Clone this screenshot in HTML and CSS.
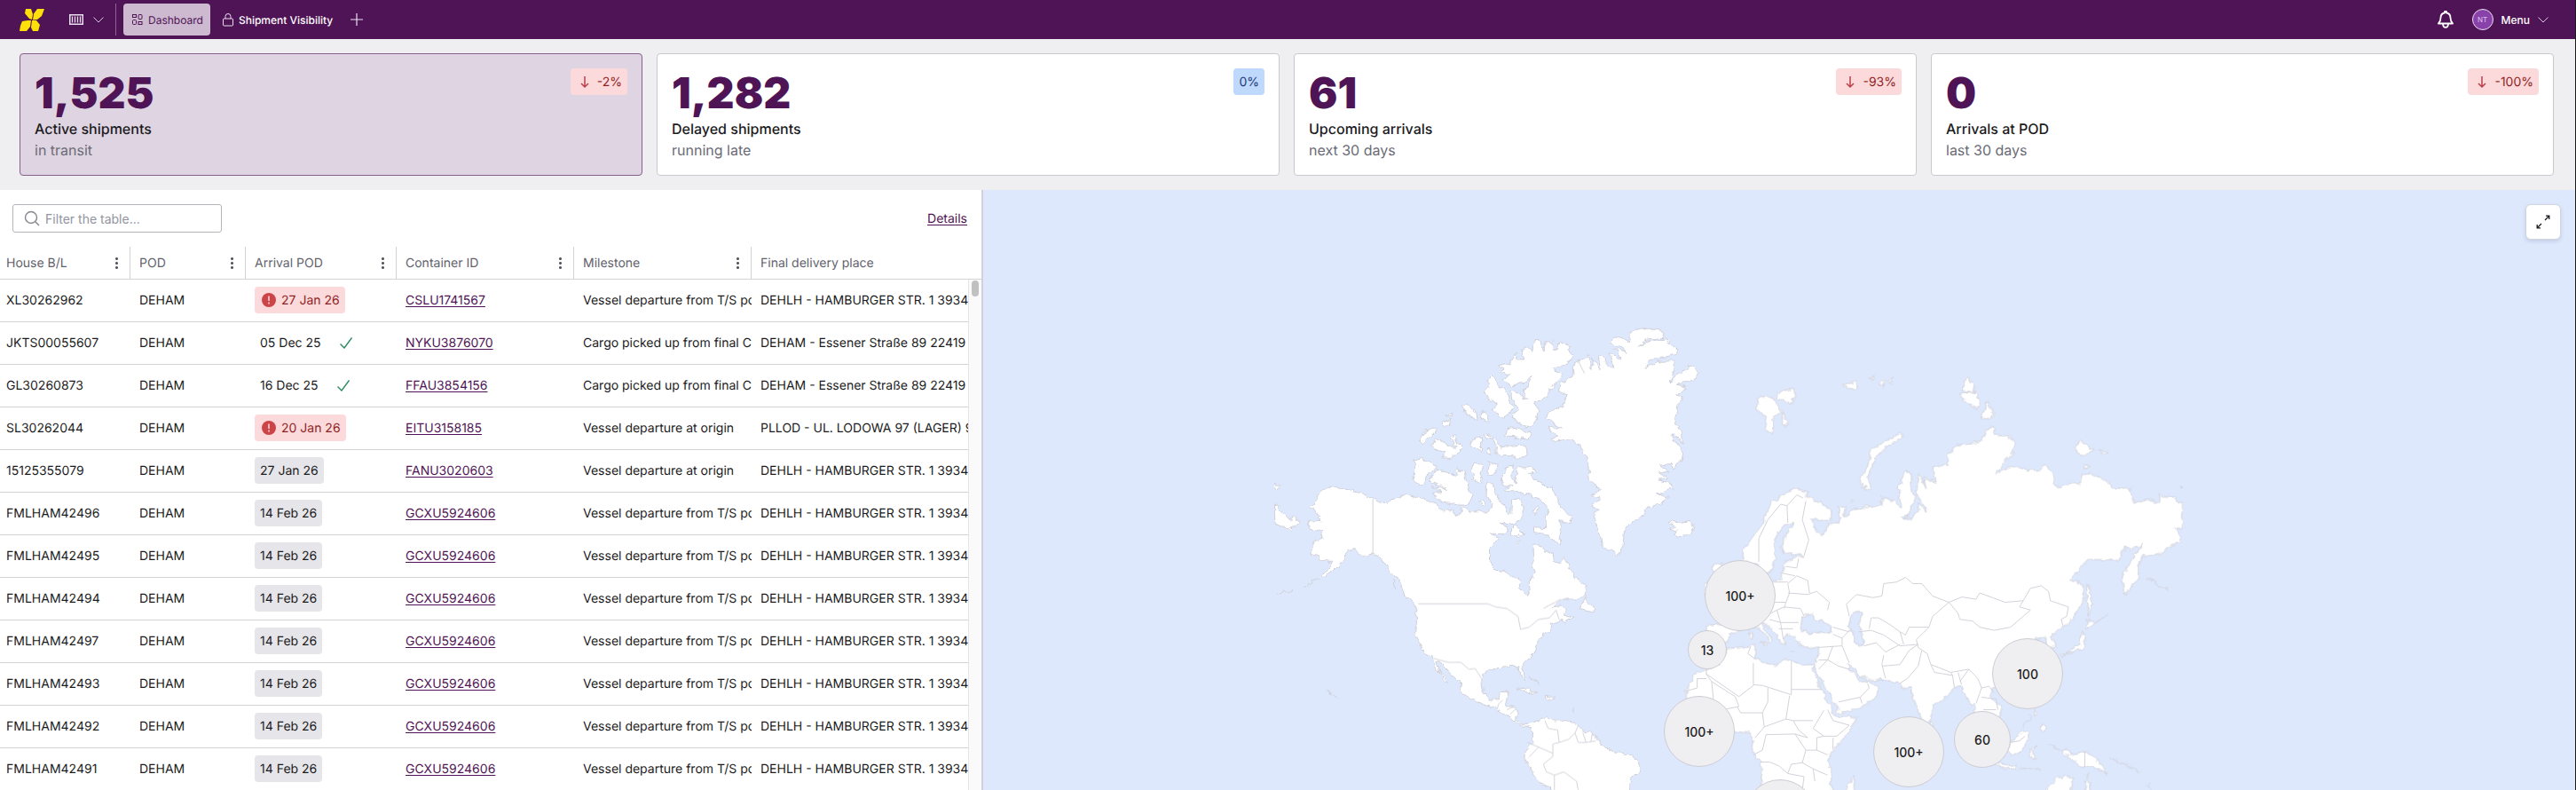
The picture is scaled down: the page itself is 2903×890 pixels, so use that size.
FILE: index.html
```html
<!DOCTYPE html>
<html lang="en">
<head>
<meta charset="utf-8">
<title>Dashboard</title>
<link rel="stylesheet" href="styles.css">
</head>
<body>
<div class="app">
<header class="topbar">
  <svg class="logo" viewBox="0 0 28 25" fill="#ffdf0a"><path d="M7 0h6l2 6-1 6-3-1-5-6zM20 0h8l-3 8-5 4-5 .5 1-7zM3 14l6-1 4 0-1 7-4 5H0l1-6zM14 13l5 0 4 5-2 7h-6l-2-4z"/></svg>
  <button class="switcher" aria-label="Switch module">
    <svg class="box-icon" viewBox="0 0 16 12" fill="none" stroke="#eadff0"><path d="M.75.75h14.5v10.5H.75z" stroke-width="1.5"/><path d="M3.5 2.5v7M6.5 2.5v7M9.500 2.500v7M12.500 2.500v7" stroke-width="1.300"/></svg>
    <svg class="chevron" viewBox="0 0 12 7" fill="none" stroke="#d9c6df"><path d="M.5.5 6 6 11.500.5"/></svg>
  </button>
  <nav class="tabs">
    <a class="tab tab-active" href="#dashboard"><svg class="tab-icon" viewBox="0 0 12 12" fill="none" stroke="currentColor"><rect x=".5" y=".5" width="4" height="3"/><rect x="7" y=".5" width="4" height="5" rx="1"/><rect x=".5" y="6.500" width="4" height="5" rx="1"/><rect x="7" y="8.500" width="4" height="3"/></svg>Dashboard</a>
    <a class="tab" href="#visibility"><svg class="lock-icon" viewBox="0 0 12 15" fill="none" stroke="#eadff0"><rect x=".5" y="6" width="11" height="8" rx="1"/><path d="M3 6V3.500a3 3 0 0 1 6 0V6"/></svg>Shipment Visibility</a>
  </nav>
  <button class="add" aria-label="Add tab"><svg class="plus" viewBox="0 0 14 14" stroke="#eadff0" stroke-width="1.200"><path d="M7 0v14M0 7h14"/></svg></button>
  <div class="account">
    <button class="bell" aria-label="Notifications"><svg class="bell-icon" viewBox="0 0 18 20" fill="none" stroke="#fff" stroke-width="1.800" stroke-linejoin="round"><path d="M1 14.500h16c-2-2-2.500-3-2.500-6.500 0-3-2-5-4.500-5.500V1H8v1.500C5.500 3 3.500 5 3.500 8c0 3.500-.5 4.500-2.500 6.500zM6 15.500c.5 4.500 5.500 4.500 6 0"/></svg></button>
    <button class="menu"><span class="avatar">NT</span>Menu<svg class="chevron" viewBox="0 0 12 7" fill="none" stroke="#d9c6df"><path d="M.5.5 6 6 11.500.5"/></svg></button>
  </div>
</header>

<section class="cards">
  <article class="card card-active"><div><p class="figure">1,525</p><h2 class="label">Active shipments</h2><p class="note">in transit</p></div><span class="badge badge-down"><svg class="arrow" viewBox="0 0 20 20"><path d="M10 4v12M6 12l4 4 4-4"/></svg>-2%</span></article>
  <article class="card"><div><p class="figure">1,282</p><h2 class="label">Delayed shipments</h2><p class="note">running late</p></div><span class="badge badge-flat">0%</span></article>
  <article class="card"><div><p class="figure">61</p><h2 class="label">Upcoming arrivals</h2><p class="note">next 30 days</p></div><span class="badge badge-down"><svg class="arrow" viewBox="0 0 20 20"><path d="M10 4v12M6 12l4 4 4-4"/></svg>-93%</span></article>
  <article class="card"><div><p class="figure">0</p><h2 class="label">Arrivals at POD</h2><p class="note">last 30 days</p></div><span class="badge badge-down"><svg class="arrow" viewBox="0 0 20 20"><path d="M10 4v12M6 12l4 4 4-4"/></svg>-100%</span></article>
</section>

<main class="main">
<section class="list">
  <div class="tools">
    <label class="search"><svg class="lens" viewBox="0 0 18 18" fill="none" stroke="#85868e" stroke-width="1.400"><circle cx="8" cy="8" r="6.500"/><path d="m13 13 4 4"/></svg><input type="text" placeholder="Filter the table..." aria-label="Filter the table"></label>
    <a class="link" href="#details">Details</a>
  </div>
  <div class="grid">
    <table class="table">
      <colgroup><col class="c-house"><col class="c-pod"><col class="c-arrival"><col class="c-wide"><col class="c-wide"><col></colgroup>
      <thead><tr>
        <th><div class="head">House B/L<button class="dots" aria-label="Column menu"></button></div></th>
        <th><div class="head">POD<button class="dots" aria-label="Column menu"></button></div></th>
        <th><div class="head">Arrival POD<button class="dots" aria-label="Column menu"></button></div></th>
        <th><div class="head">Container ID<button class="dots" aria-label="Column menu"></button></div></th>
        <th><div class="head">Milestone<button class="dots" aria-label="Column menu"></button></div></th>
        <th><div class="head">Final delivery place</div></th>
      </tr></thead>
      <tbody>
        <tr><td>XL30262962</td><td>DEHAM</td><td><span class="badge badge-late"><svg class="alert" viewBox="0 0 16 16"><circle cx="8" cy="8" r="8"/><path d="M8 3.500v5.500M8 10.500v2"/></svg>27 Jan 26</span></td><td><a class="link" href="#c1">CSLU1741567</a></td><td>Vessel departure from T/S port</td><td>DEHLH - HAMBURGER STR. 1 39340 HALDENSLEBEN</td></tr>
        <tr><td>JKTS00055607</td><td>DEHAM</td><td><span class="badge badge-done">05 Dec 25<svg class="check" viewBox="0 0 14 13"><path d="m.5 7.500 4.500 4.500L13.500.5"/></svg></span></td><td><a class="link" href="#c2">NYKU3876070</a></td><td>Cargo picked up from final CY</td><td>DEHAM - Essener Straße 89 22419</td></tr>
        <tr><td>GL30260873</td><td>DEHAM</td><td><span class="badge badge-done">16 Dec 25<svg class="check" viewBox="0 0 14 13"><path d="m.5 7.500 4.500 4.500L13.500.5"/></svg></span></td><td><a class="link" href="#c3">FFAU3854156</a></td><td>Cargo picked up from final CY</td><td>DEHAM - Essener Straße 89 22419</td></tr>
        <tr><td>SL30262044</td><td>DEHAM</td><td><span class="badge badge-late"><svg class="alert" viewBox="0 0 16 16"><circle cx="8" cy="8" r="8"/><path d="M8 3.500v5.500M8 10.500v2"/></svg>20 Jan 26</span></td><td><a class="link" href="#c4">EITU3158185</a></td><td>Vessel departure at origin</td><td>PLLOD - UL. LODOWA 97 (LAGER) 93-232</td></tr>
        <tr><td>15125355079</td><td>DEHAM</td><td><span class="badge badge-plan">27 Jan 26</span></td><td><a class="link" href="#c5">FANU3020603</a></td><td>Vessel departure at origin</td><td>DEHLH - HAMBURGER STR. 1 39340 HALDENSLEBEN</td></tr>
        <tr><td>FMLHAM42496</td><td>DEHAM</td><td><span class="badge badge-plan">14 Feb 26</span></td><td><a class="link" href="#c6">GCXU5924606</a></td><td>Vessel departure from T/S port</td><td>DEHLH - HAMBURGER STR. 1 39340 HALDENSLEBEN</td></tr>
        <tr><td>FMLHAM42495</td><td>DEHAM</td><td><span class="badge badge-plan">14 Feb 26</span></td><td><a class="link" href="#c6">GCXU5924606</a></td><td>Vessel departure from T/S port</td><td>DEHLH - HAMBURGER STR. 1 39340 HALDENSLEBEN</td></tr>
        <tr><td>FMLHAM42494</td><td>DEHAM</td><td><span class="badge badge-plan">14 Feb 26</span></td><td><a class="link" href="#c6">GCXU5924606</a></td><td>Vessel departure from T/S port</td><td>DEHLH - HAMBURGER STR. 1 39340 HALDENSLEBEN</td></tr>
        <tr><td>FMLHAM42497</td><td>DEHAM</td><td><span class="badge badge-plan">14 Feb 26</span></td><td><a class="link" href="#c6">GCXU5924606</a></td><td>Vessel departure from T/S port</td><td>DEHLH - HAMBURGER STR. 1 39340 HALDENSLEBEN</td></tr>
        <tr><td>FMLHAM42493</td><td>DEHAM</td><td><span class="badge badge-plan">14 Feb 26</span></td><td><a class="link" href="#c6">GCXU5924606</a></td><td>Vessel departure from T/S port</td><td>DEHLH - HAMBURGER STR. 1 39340 HALDENSLEBEN</td></tr>
        <tr><td>FMLHAM42492</td><td>DEHAM</td><td><span class="badge badge-plan">14 Feb 26</span></td><td><a class="link" href="#c6">GCXU5924606</a></td><td>Vessel departure from T/S port</td><td>DEHLH - HAMBURGER STR. 1 39340 HALDENSLEBEN</td></tr>
        <tr><td>FMLHAM42491</td><td>DEHAM</td><td><span class="badge badge-plan">14 Feb 26</span></td><td><a class="link" href="#c6">GCXU5924606</a></td><td>Vessel departure from T/S port</td><td>DEHLH - HAMBURGER STR. 1 39340 HALDENSLEBEN</td></tr>
      </tbody>
    </table>
    <div class="rail"><div class="rail-head"></div><div class="rail-track"><div class="rail-thumb"></div></div></div>
  </div>
</section>

<section class="map">
  <div class="world">
    <svg class="land" viewBox="0 0 1794 676">
      <defs><filter id="coast" x="0" y="0" width="100%" height="100%"><feTurbulence type="fractalNoise" baseFrequency=".14" numOctaves="2" seed="4"/><feDisplacementMap in="SourceGraphic" scale="7" xChannelSelector="R" yChannelSelector="G"/></filter></defs>
      <g filter="url(#coast)">
      <g class="shape" transform="translate(292 126) scale(.3571 .3508)">
        <path d="M1042 203 1090 173 1096 186 1098 215 1106 198 1108 180 1118 200 1132 220 1126 168 1140 182 1160 208 1172 215 1168 190 1156 162 1180 175 1190 182 1186 160 1175 148 1210 160 1200 145 1158 135 1175 118 1195 115 1218 130 1228 122 1220 98 1240 90 1268 84 1320 92 1330 105 1325 115 1280 122 1250 140 1290 125 1336 120 1350 135 1372 150 1368 165 1345 178 1285 184 1272 212 1310 192 1364 190 1364 215 1348 265 1375 230 1405 222 1404 202 1430 208 1440 230 1420 255 1372 265 1400 275 1392 290 1370 300 1392 305 1378 325 1375 345 1365 390 1385 410 1387 455 1365 425 1355 425 1375 460 1390 480 1380 515 1360 540 1355 520 1320 525 1345 545 1315 550 1340 565 1310 572 1345 580 1362 605 1345 600 1330 615 1306 618 1345 628 1320 650 1275 660 1268 682 1240 705 1215 718 1205 740 1202 780 1185 815 1165 795 1140 795 1130 755 1115 715 1105 680 1125 670 1105 655 1130 635 1100 620 1130 605 1098 575 1095 530 1085 490 1065 460 1030 440 985 450 975 440 1000 430 975 420 970 400 1010 408 985 390 955 375 965 355 1010 335 1025 300 1000 290 1005 262 1045 240z"/>
        <path d="M842 195 860 165 870 185 890 185 880 155 900 145 915 160 922 128 940 125 955 160 958 128 980 128 985 158 1000 132 1028 145 1044 175 1030 195 985 215 1010 232 975 280 960 305 940 320 920 325 938 350 930 375 910 405 890 400 865 385 848 360 875 350 860 330 850 300 845 285 870 290 885 310 900 312 885 282 905 270 915 235 890 262 855 270 820 250 845 235 812 225 830 215 808 205z"/>
        <path d="M790 232 800 255 810 270 838 295 850 335 840 365 825 375 790 350 805 330 775 310 765 290 778 275 775 250zM695 330 715 335 740 355 742 385 725 372 705 360zM757 350 775 365 775 388 757 378zM630 385 660 378 655 395 632 402zM640 362 660 354 660 364zM560 445 575 415 610 402 605 425 570 455zM610 440 645 455 650 465 675 465 660 435 668 425 680 455 690 460 690 485 655 500 630 498 640 485 610 475 598 462zM722 450 735 435 755 438 755 480 740 470 718 462zM765 420 800 440 815 470 850 465 895 462 900 490 880 500 850 495 815 495 800 485 802 465 790 440 768 435zM835 410 870 405 912 425 905 445 880 435 830 430zM775 470 788 480 785 492 772 490z"/>
        <path d="M545 505 560 502 612 527 600 545 580 560 575 580 558 590 538 570 545 540zM612 540 650 550 680 562 675 535 700 545 710 590 728 620 715 650 680 650 625 640 600 615 630 612 595 595 645 600 590 575zM735 520 760 522 755 560 758 585 725 570 735 555 722 545zM778 515 810 520 795 555 775 560zM745 640 760 636 768 652 755 655z"/>
        <path d="M822 570 830 530 855 525 850 560 860 580 870 530 915 530 925 545 905 552 920 570 945 580 965 600 975 595 990 625 1000 650 1010 665 1040 695 1030 715 1000 700 1008 715 1005 740 1000 760 1005 780 975 765 955 745 920 740 920 725 960 722 955 695 965 680 960 655 940 635 900 615 870 615 825 605 850 592 820 588zM850 725 860 715 885 745 865 755 850 752zM868 770 880 765 872 780zM920 665 932 655 932 680 922 682z"/>
        <path d="M285 592 325 605 380 615 412 630 455 650 480 630 515 618 555 628 610 650 625 672 665 672 680 692 695 660 720 675 775 675 790 650 770 620 772 580 792 590 800 620 810 640 830 650 835 685 848 680 850 635 870 628 885 650 885 690 860 710 830 712 815 710 840 725 830 745 785 745 808 760 780 795 780 830 798 862 830 865 860 888 878 893 878 925 900 945 908 925 905 895 925 870 915 840 920 810 918 778 950 785 965 805 980 810 985 835 1005 840 1015 818 1030 850 1045 880 1065 895 1087 920 1085 940 1050 955 1005 955 980 980 1005 975 1020 990 1015 1010 1045 1012 1012 1030 1010 1020 975 1035 970 1055 935 1080 928 1115 920 1130 890 1160 885 1175 892 1210 878 1200 870 1170 845 1170 820 1175 780 1178 760 1195 755 1215 760 1255 780 1277 805 1277 815 1253 840 1252 832 1285 830 1302 865 1303 865 1340 880 1355 905 1355 920 1350 960 1335 975 1345 1030 1345 1060 1360 1080 1380 1110 1385 1130 1420 1175 1445 1205 1450 1245 1468 1253 1480 1250 1510 1225 1535 1220 1600 1000 1600 980 1568 930 1535 905 1490 890 1465 895 1440 915 1415 918 1380 915 1370 895 1365 875 1358 835 1325 805 1308 770 1297 740 1285 695 1258 690 1230 655 1195 625 1155 612 1152 625 1190 655 1222 640 1220 610 1170 603 1145 575 1130 560 1100 545 1070 548 1000 552 990 545 970 515 945 500 900 470 870 440 825 412 810 380 815 355 795 335 800 320 825 295 855 260 885 250 880 275 855 285 833 248 833 240 815 215 808 225 775 255 760 250 738 208 725 205 708 250 705 235 690 245 685 210 660 230 645 245 612z"/>
        <path d="M1085 945 1090 965 1110 980 1110 995 1065 985zM865 1240 900 1242 935 1260 905 1255zM955 1268 975 1265 985 1275 960 1277zM1345 710 1360 705 1375 712 1410 702 1425 725 1415 745 1380 755 1360 745 1370 735 1348 730 1365 722zM102 650 130 680 150 700 165 688 180 705 160 722 155 738 130 725 103 712zM103 585 118 590 112 600 102 597zM112 935 160 928M190 918 245 888M270 1250 300 1272M905 1205 940 1235M1045 1300 1048 1320M475 895 485 925"/>
      </g>
      <g class="shape" transform="translate(772 126) scale(.4082 .3508)">
        <path d="M210 835 203 795 225 770 255 725 270 680 290 645 320 615 350 600 385 610 380 625 420 645 450 670 450 700 420 705 395 695 410 740 428 748 445 715 475 705 470 655 488 660 485 690 505 670 545 658 590 655 592 628 625 640 645 665 635 600 655 545 672 550 672 590 680 640 660 690 650 697 670 700 690 670 690 645 715 675 700 640 685 625 690 550 712 600 705 565 740 580 730 530 775 520 770 490 800 460 865 450 880 405 900 398 905 425 940 430 957 455 950 490 920 525 905 550 960 525 985 540 1025 545 1040 525 1060 545 1065 580 1080 600 1100 583 1140 585 1145 555 1165 552 1215 578 1225 598 1275 600 1290 650 1320 635 1355 645 1355 622 1395 628 1420 650 1420 730 1400 730 1417 770 1385 785 1360 808 1310 815 1298 850 1303 880 1260 942 1253 885 1275 840 1310 775 1280 800 1262 785 1245 828 1160 828 1110 890 1145 910 1145 960 1120 1015 1095 1042 1070 1055 1060 1075 1068 1110 1045 1115 1040 1075 1010 1085 990 1110 985 1200 900 1240 885 1262 915 1300 922 1325 905 1340 870 1320 860 1340 850 1320 845 1290 835 1298 820 1260 810 1235 788 1240 775 1262 745 1285 728 1300 725 1335 715 1352 700 1340 685 1300 672 1255 670 1240 650 1245 640 1225 610 1215 560 1213 530 1205 505 1170 495 1165 500 1180 520 1205 535 1222 555 1215 560 1225 582 1245 570 1275 550 1290 500 1315 470 1322 465 1300 440 1250 410 1190 405 1165 415 1130 415 1108 395 1112 365 1105 355 1080 340 1070 325 1065 318 1085 325 1105 312 1095 300 1070 275 1040 255 1030 275 1065 288 1085 280 1095 275 1075 245 1045 200 1055 170 1065 165 1090 150 1100 108 1095 105 1040 145 1035 160 1000 220 880 290 900 310 895 318 850 335 825 375 815 350 810 315 808 318 765 345 715 325 712 300 745 290 780 298 820 280 870 250 868 245 840z"/>
        <path d="M165 1115 205 1108 238 1103 242 1125 238 1145 300 1168 320 1148 375 1165 405 1165 400 1185 425 1245 440 1290 465 1335 522 1332 500 1380 455 1440 440 1470 450 1520 450 1600 260 1600 255 1480 230 1440 235 1400 225 1385 185 1380 130 1340 80 1320 50 1270 50 1245 75 1195 105 1180 140 1165z"/>
        <path d="M245 310 275 300 300 320 315 355 290 370 285 425 270 410 270 370 245 350zM300 290 345 280 352 300 340 325 300 310zM315 360 330 385 328 400 315 395zM545 605 560 600 550 570 570 500 600 470 647 432 640 422 590 455 560 475 550 530 528 570zM825 238 845 270 840 292 812 288zM805 295 850 290 862 330 855 345 825 325zM880 320 897 360 890 375 865 375zM485 270 520 255 522 275 500 285zM555 245 570 240 568 250zM585 262 597 250 595 275zM608 255 620 242 617 260zM1125 455 1140 450 1175 475 1150 492 1130 488zM1188 475 1215 485 1200 490zM1148 520 1165 532 1148 535zM1157 905 1165 930 1168 975 1160 1010 1155 960zM1155 1020 1180 1030 1155 1050zM1145 1060 1152 1090 1145 1115 1115 1125 1095 1130 1130 1105zM1085 1135 1095 1130 1090 1145zM1010 1305 1020 1325 1012 1330zM1030 1355 1045 1365 1040 1380 1025 1370zM945 1415 985 1375 995 1385 980 1440 950 1455 940 1440zM1000 1435 1020 1425 1005 1440 1012 1470 1000 1460zM905 1482 960 1490 960 1502 910 1492zM1085 1440 1100 1435 1110 1455 1150 1443 1190 1475 1210 1515 1170 1490 1140 1495 1105 1460zM1020 1600 1075 1530 1095 1525 1118 1530 1110 1600zM1150 1600 1158 1515 1172 1600zM475 1600 512 1525 515 1600zM225 1062 233 1062 232 1080 226 1080zM255 1095 273 1095 268 1103zM120 850 145 840 150 860 125 870zM100 905 112 900 112 950 102 940zM720 1350 733 1355 728 1368zM505 635 512 640 507 650zM1415 590 1420 595 1415 598zM980 1365 1003 1325M1050 1420 1080 1440M970 1500 1030 1505M1180 1030 1215 1005M1320 885 1380 925M1215 1460 1300 1510M1325 1550 1340 1568M340 1118 350 1122"/>
        <path class="sea" d="M510 995 538 998 525 1035 540 1080 535 1105 512 1095 510 1065 497 1040zM370 1010 395 1000 410 1020 450 1040 450 1060 425 1063 385 1062 365 1055zM645 690 665 685 655 698z"/>
      </g>
      </g>
      <g class="border" transform="translate(292 126) scale(.3571 .3508)">
        <path d="M412 630V810M555 970H775L800 980 835 985 870 1010 878 1052 905 1045 935 1020 970 1015 990 990 1000 1020M603 1145 650 1158 690 1158 715 1180 735 1178 755 1210M805 1308 808 1292 822 1280M835 1310 855 1300M845 1325 865 1305M955 1345 965 1370 995 1375 1000 1415 1030 1405 1050 1385 1060 1360M1050 1385 1060 1415 1085 1415 1075 1385M1085 1415 1115 1410M1100 1412 1105 1385M1000 1415 980 1420 980 1460 950 1485 960 1510 985 1520 1015 1510 1055 1540 1060 1568M900 1415 935 1430 980 1450M935 1430 905 1462M985 1520V1568M950 985 1005 955M1060 190 1080 230"/>
      </g>
      <g class="border" transform="translate(772 126) scale(.4082 .3508)">
        <path d="M500 1010 492 970 520 940 565 950 590 945 595 905 630 900 655 885 675 905 700 905 730 945 775 965 810 948 850 955 860 935 895 950 930 965 980 960 1000 920 1030 912 1050 930 1055 960 1105 980 1100 1010 1085 1020 1090 1042M775 965 800 1000 805 1020 840 1025 860 1045 900 1055 945 1045 975 1015 1000 990 970 980 980 960M775 965 745 995 730 1010 720 1045 685 1085 690 1110 715 1130 725 1165 780 1190 830 1180 855 1210 865 1240 885 1235 900 1255M555 1050 560 1015 580 1015 610 1035 640 1060 655 1070 665 1045 720 1045M525 1060 560 1055 595 1070 640 1105 690 1100M640 1060 650 1100M595 1135 590 1165 600 1210M540 1105 575 1095 600 1125 640 1100M590 1170 640 1165 665 1120 690 1100M640 1225 660 1210 690 1170 700 1120M725 1165 735 1190 785 1200 780 1190M785 1200 790 1240M800 1190 810 1230M830 1180 805 1220M865 1240 850 1290M865 1270 905 1275 910 1310M870 1310 905 1310M330 935 385 940 410 930 445 965 440 990M335 935 330 905 355 880 385 895 390 935M295 900H330M335 935 325 965 295 965M310 870 350 880M325 850 355 855 360 825M375 815 388 765 370 700 380 640M330 710 328 655 310 650M310 650 275 700 250 760 250 835M328 655 355 620 372 630M455 1068 480 1080 480 1105 415 1110M480 1105 500 1160M415 1150 440 1150 470 1170 500 1180M440 1150 455 1105M415 1180 440 1150M470 1285 530 1270 555 1240 550 1225M530 1270 535 1290M500 1055 480 1080M455 1045 500 1060M275 1005 300 990 320 980 365 985M300 990 310 1030 360 1030M305 1050 345 1050M280 1020 310 1030M310 1030 318 1085M325 965 320 985M365 985 375 1010"/>
        <path d="M105 1180V1195L195 1268M238 1145 220 1130M220 1130 228 1105M235 1160V1230L260 1232 340 1262V1155M340 1245H425M195 1268 235 1232M105 1195 120 1220 125 1280M120 1220 185 1268 195 1300 150 1310M105 1210H80V1240L50 1250M275 1240V1285L260 1320H200L190 1300M335 1265 325 1340M265 1365 325 1340 345 1345 400 1345M430 1312 400 1370 430 1395 465 1395 500 1360 455 1345 440 1310M270 1390 350 1388 385 1400M380 1440H410L440 1455M260 1320 265 1365 240 1400M270 1390 260 1440 235 1455M350 1388 380 1440 370 1480 400 1500 405 1540M255 1478H280L305 1490 330 1515 375 1525 370 1568M410 1440V1400L430 1395M455 1440V1400M330 1515 340 1485 370 1480M400 1500 440 1520M345 1345 360 1375 385 1400M1150 1443V1495M945 1415 970 1410 985 1395"/>
      </g>
    </svg>
    <button class="pin pin-lg" style="--x:853;--y:457">100+</button>
    <button class="pin pin-sm" style="--x:816;--y:518">13</button>
    <button class="pin pin-lg" style="--x:807;--y:610">100+</button>
    <button class="pin pin-lg" style="--x:1043;--y:633">100+</button>
    <button class="pin pin-md" style="--x:1126;--y:619">60</button>
    <button class="pin pin-lg" style="--x:1177;--y:545">100</button>
    <button class="pin pin-lg" style="--x:898;--y:704" aria-label="Cluster"></button>
  </div>
  <button class="expand" aria-label="Expand map"><svg class="expand-icon" viewBox="0 0 16 16" fill="none" stroke="#1b1b22" stroke-width="1.300"><path d="M11 1.200h3.800V5M14.800 1.200 10 6M5 14.800H1.200V11M1.200 14.800 6 10"/></svg></button>
</section>
</main>
</div>
</body>
</html>
```
FILE: styles.css
```css
* { box-sizing: border-box; }
body { margin: 0; font-family: Inter, "Liberation Sans", sans-serif; font-size: 14px; color: #1b1b22; overflow: hidden; text-rendering: geometricPrecision; }
p, h2 { margin: 0; }
button { margin: 0; padding: 0; border: 0; background: none; font: inherit; color: inherit; }
svg { display: block; flex: none; }
.app { height: 100vh; display: flex; flex-direction: column; background: #efeef0; border-right: 1px solid #1a1a1a; }

.topbar { flex: none; height: 44px; display: flex; align-items: center; padding: 0 30px 0 22px; background: #4f1455; color: #fff; font-size: 12px; font-weight: 500; }
.logo { width: 28px; height: 25px; }
.switcher { display: flex; align-items: center; gap: 11px; height: 36px; margin-left: 28px; padding-right: 13px; border-right: 1px solid #8d6592; }
.box-icon { width: 16px; height: 12px; }
.chevron { width: 12px; height: 7px; }
.tabs { display: flex; margin-left: 8px; gap: 4px; }
.tab { display: flex; align-items: center; gap: 6px; height: 36px; padding: 0 8px 0 10px; border-radius: 4px; color: #fff; text-decoration: none; }
.tab-active { background: #cdb9d0; color: #4f1455; font-weight: 400; }
.tab-icon { width: 12px; height: 12px; }
.lock-icon { width: 12px; height: 15px; }
.add { margin-left: 12px; }
.plus { width: 14px; height: 14px; }
.account { display: flex; align-items: center; gap: 21px; margin-left: auto; }
.bell-icon { width: 18px; height: 20px; }
.menu { display: flex; align-items: center; gap: 9px; }
.avatar { display: grid; place-items: center; width: 24px; height: 24px; border: 1px solid #eadff0; border-radius: 50%; background: #8a42ab; font-size: 8px; font-weight: 400; color: #d9c6ea; }

.cards { flex: none; display: grid; grid-template-columns: repeat(4, minmax(0, 1fr)); gap: 16px; padding: 16px 24px 16px 22px; }
.card { display: flex; justify-content: space-between; align-items: flex-start; height: 138px; padding: 16px; border: 1px solid #c9c9cf; border-radius: 4px; background: #fff; }
.card-active { background: #dfd4e1; border-color: #84608a; }
.figure { font-size: 48px; line-height: 56px; font-weight: 900; color: #4f1455; }
.label { font-size: 16px; line-height: 24px; font-weight: 500; }
.note { font-size: 16px; line-height: 24px; color: #6b6b76; }
.badge { display: inline-flex; align-items: center; height: 30px; padding: 0 6px; border-radius: 4px; font-size: 14px; vertical-align: middle; }
.badge-down, .badge-late { background: #fcd9db; color: #8f1f24; }
.badge-down { gap: 4px; }
.badge-late { gap: 6px; padding-left: 8px; }
.badge-flat { background: #bfd9fd; color: #1e3a78; }
.badge-plan { background: #e6e5ea; }
.badge-done { gap: 21px; }
.arrow { width: 20px; height: 20px; fill: none; stroke: #b9404a; stroke-width: 1.5; }
.alert { width: 16px; height: 16px; fill: #cb4548; stroke: #fcd9db; stroke-width: 1.500; }
.alert circle { stroke: none; }
.check { width: 14px; height: 13px; fill: none; stroke: #2a8a5e; stroke-width: 1.400; }

.main { flex: 1; min-height: 0; display: grid; grid-template-columns: minmax(0, 1108fr) minmax(0, 1794fr); }
.list { min-height: 0; overflow: hidden; background: #fff; border-right: 2px solid #cfd2da; }
.tools { display: flex; justify-content: space-between; align-items: center; padding: 16px 16px 16px 14px; }
.search { display: flex; align-items: center; gap: 6px; width: 236px; height: 32px; padding: 0 12px; border: 1px solid #b4b5bb; border-radius: 3px; }
.lens { width: 18px; height: 18px; }
.search input { width: 100%; border: 0; padding: 0; outline: 0; background: none; font: inherit; }
.search input::placeholder { color: #92949f; opacity: 1; }
.link { color: #4f1455; text-decoration: underline; text-underline-offset: 2px; }
.grid { display: flex; }
.table { flex: 1; width: 100%; min-width: 0; table-layout: fixed; border-collapse: separate; border-spacing: 0; }
.c-house { width: 147px; }
.c-pod { width: 130px; }
.c-arrival { width: 170px; }
.c-wide { width: 200px; }
.table th, .table td { padding: 0 0 0 10px; text-align: left; font-weight: 400; white-space: nowrap; overflow: hidden; border-bottom: 1px solid #d3d3d7; }
.table th { height: 37px; color: #62626c; border-right: 1px solid #d3d3d7; }
.table th:last-child { border-right: 0; }
.table th:first-child, .table td:first-child { padding-left: 7px; }
.table td { height: 48px; padding-bottom: 1px; }
.head { display: flex; align-items: center; justify-content: space-between; padding-right: 13px; }
.dots { width: 3px; height: 13px; background: radial-gradient(circle, #55555f 1px, transparent 2px) center / 3px 5px; }
.rail { flex: none; width: 15px; display: flex; flex-direction: column; }
.rail-head { height: 37px; border-bottom: 1px solid #d3d3d7; }
.rail-track { flex: 1; padding: 1px 3px; background: #fafafa; border-left: 1px solid #e4e4e6; }
.rail-thumb { height: 18px; border-radius: 4px; background: #c1c1c1; }

.map { position: relative; overflow: hidden; background: #dde8fd; }
.world { position: relative; width: 100%; aspect-ratio: 1794 / 676; }
.land { width: 100%; height: 100%; }
.shape { fill: #fff; stroke: #cfcfd8; }
.sea { fill: #dde8fd; }
.border { fill: none; stroke: #d3d2da; }
.shape path, .border path { vector-effect: non-scaling-stroke; stroke-width: 1px; }
.pin { position: absolute; left: calc(var(--x) / 1794 * 100%); top: calc(var(--y) / 676 * 100%); transform: translate(-50%, -50%); display: grid; place-items: center; border: 1px solid #cccbd2; border-radius: 50%; background: #efeef0; font-weight: 500; }
.pin-sm { width: 44px; height: 44px; }
.pin-md { width: 64px; height: 64px; }
.pin-lg { width: 80px; height: 80px; }
.expand { position: absolute; top: 16px; right: 16px; display: grid; place-items: center; width: 40px; height: 40px; border: 1px solid #d2d5de; border-radius: 6px; background: #fff; box-shadow: 0 2px 4px rgba(40, 40, 80, .15); }
.expand-icon { width: 16px; height: 16px; }
```
